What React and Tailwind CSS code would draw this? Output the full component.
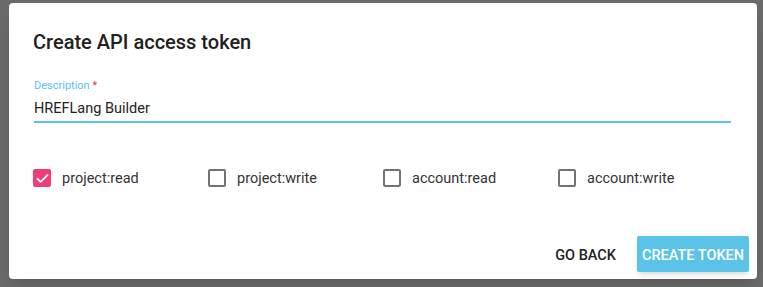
import { useState } from "react";

const scopes = ["project:read", "project:write", "account:read", "account:write"];

function Checkbox({ checked, label, onToggle }) {
  return (
    <label className="flex items-center w-[175px] cursor-pointer" onClick={onToggle}>
      {checked ? (
        <span className="w-[18px] h-[18px] rounded-[2px] bg-[#ee3d78] flex items-center justify-center">
          <svg width="15" height="15" viewBox="0 0 24 24" fill="none">
            <path d="M4 12.5l5 5L20 6.5" stroke="white" strokeWidth="3" strokeLinecap="round" strokeLinejoin="round" />
          </svg>
        </span>
      ) : (
        <span className="w-[18px] h-[18px] rounded-[2px] border-2 border-[#737373] bg-white" />
      )}
      <span className="ml-[11px] pt-[1px] text-[14.5px] text-[#333]">{label}</span>
    </label>
  );
}

export default function App() {
  const [checked, setChecked] = useState({ "project:read": true });
  const [description, setDescription] = useState("HREFLang Builder");

  const toggle = (s) => setChecked({ ...checked, [s]: !checked[s] });

  return (
    <div
      className="w-[763px] h-[287px] bg-[#6a6a6a] pt-[3px] pl-[9px] overflow-hidden"
      style={{ fontFamily: "Roboto, 'Liberation Sans', sans-serif" }}
    >
      <div className="w-[748px] h-[276px] bg-white rounded-[4px] shadow-lg flex flex-col">
        {/* Header */}
        <h1 className="pl-[24px] pt-[27px] text-[20px] leading-[24px] font-medium text-[#212121]">
          Create API access token
        </h1>

        {/* Description */}
        <div className="ml-[25px] mr-[26px] mt-[25px]">
          <label className="block text-[11px] leading-[13px] text-[#5bc3e8]">
            Description <span className="text-[#e53935]">*</span>
          </label>
          <input
            value={description}
            onChange={(e) => setDescription(e.target.value)}
            className="w-full pt-[7px] pb-[2px] text-[14.5px] leading-[20px] text-[#222] outline-none border-b-2 border-[#5bc3e8]"
          />
        </div>

        {/* Scopes */}
        <div className="flex pl-[24px] mt-[44px]">
          {scopes.map((s) => (
            <Checkbox key={s} label={s} checked={!!checked[s]} onToggle={() => toggle(s)} />
          ))}
        </div>

        {/* Actions */}
        <div className="mt-auto mb-[7px] mr-[8px] flex justify-end items-center">
          <button className="h-[36px] pt-[3px] px-[8px] mr-[13px] text-[14.5px] font-medium text-[#222] uppercase">
            Go back
          </button>
          <button className="h-[36px] pt-[3px] w-[112px] rounded-[2px] bg-[#5bc3e8] text-[14.5px] font-medium text-white uppercase shadow-md">
            Create token
          </button>
        </div>
      </div>
    </div>
  );
}
